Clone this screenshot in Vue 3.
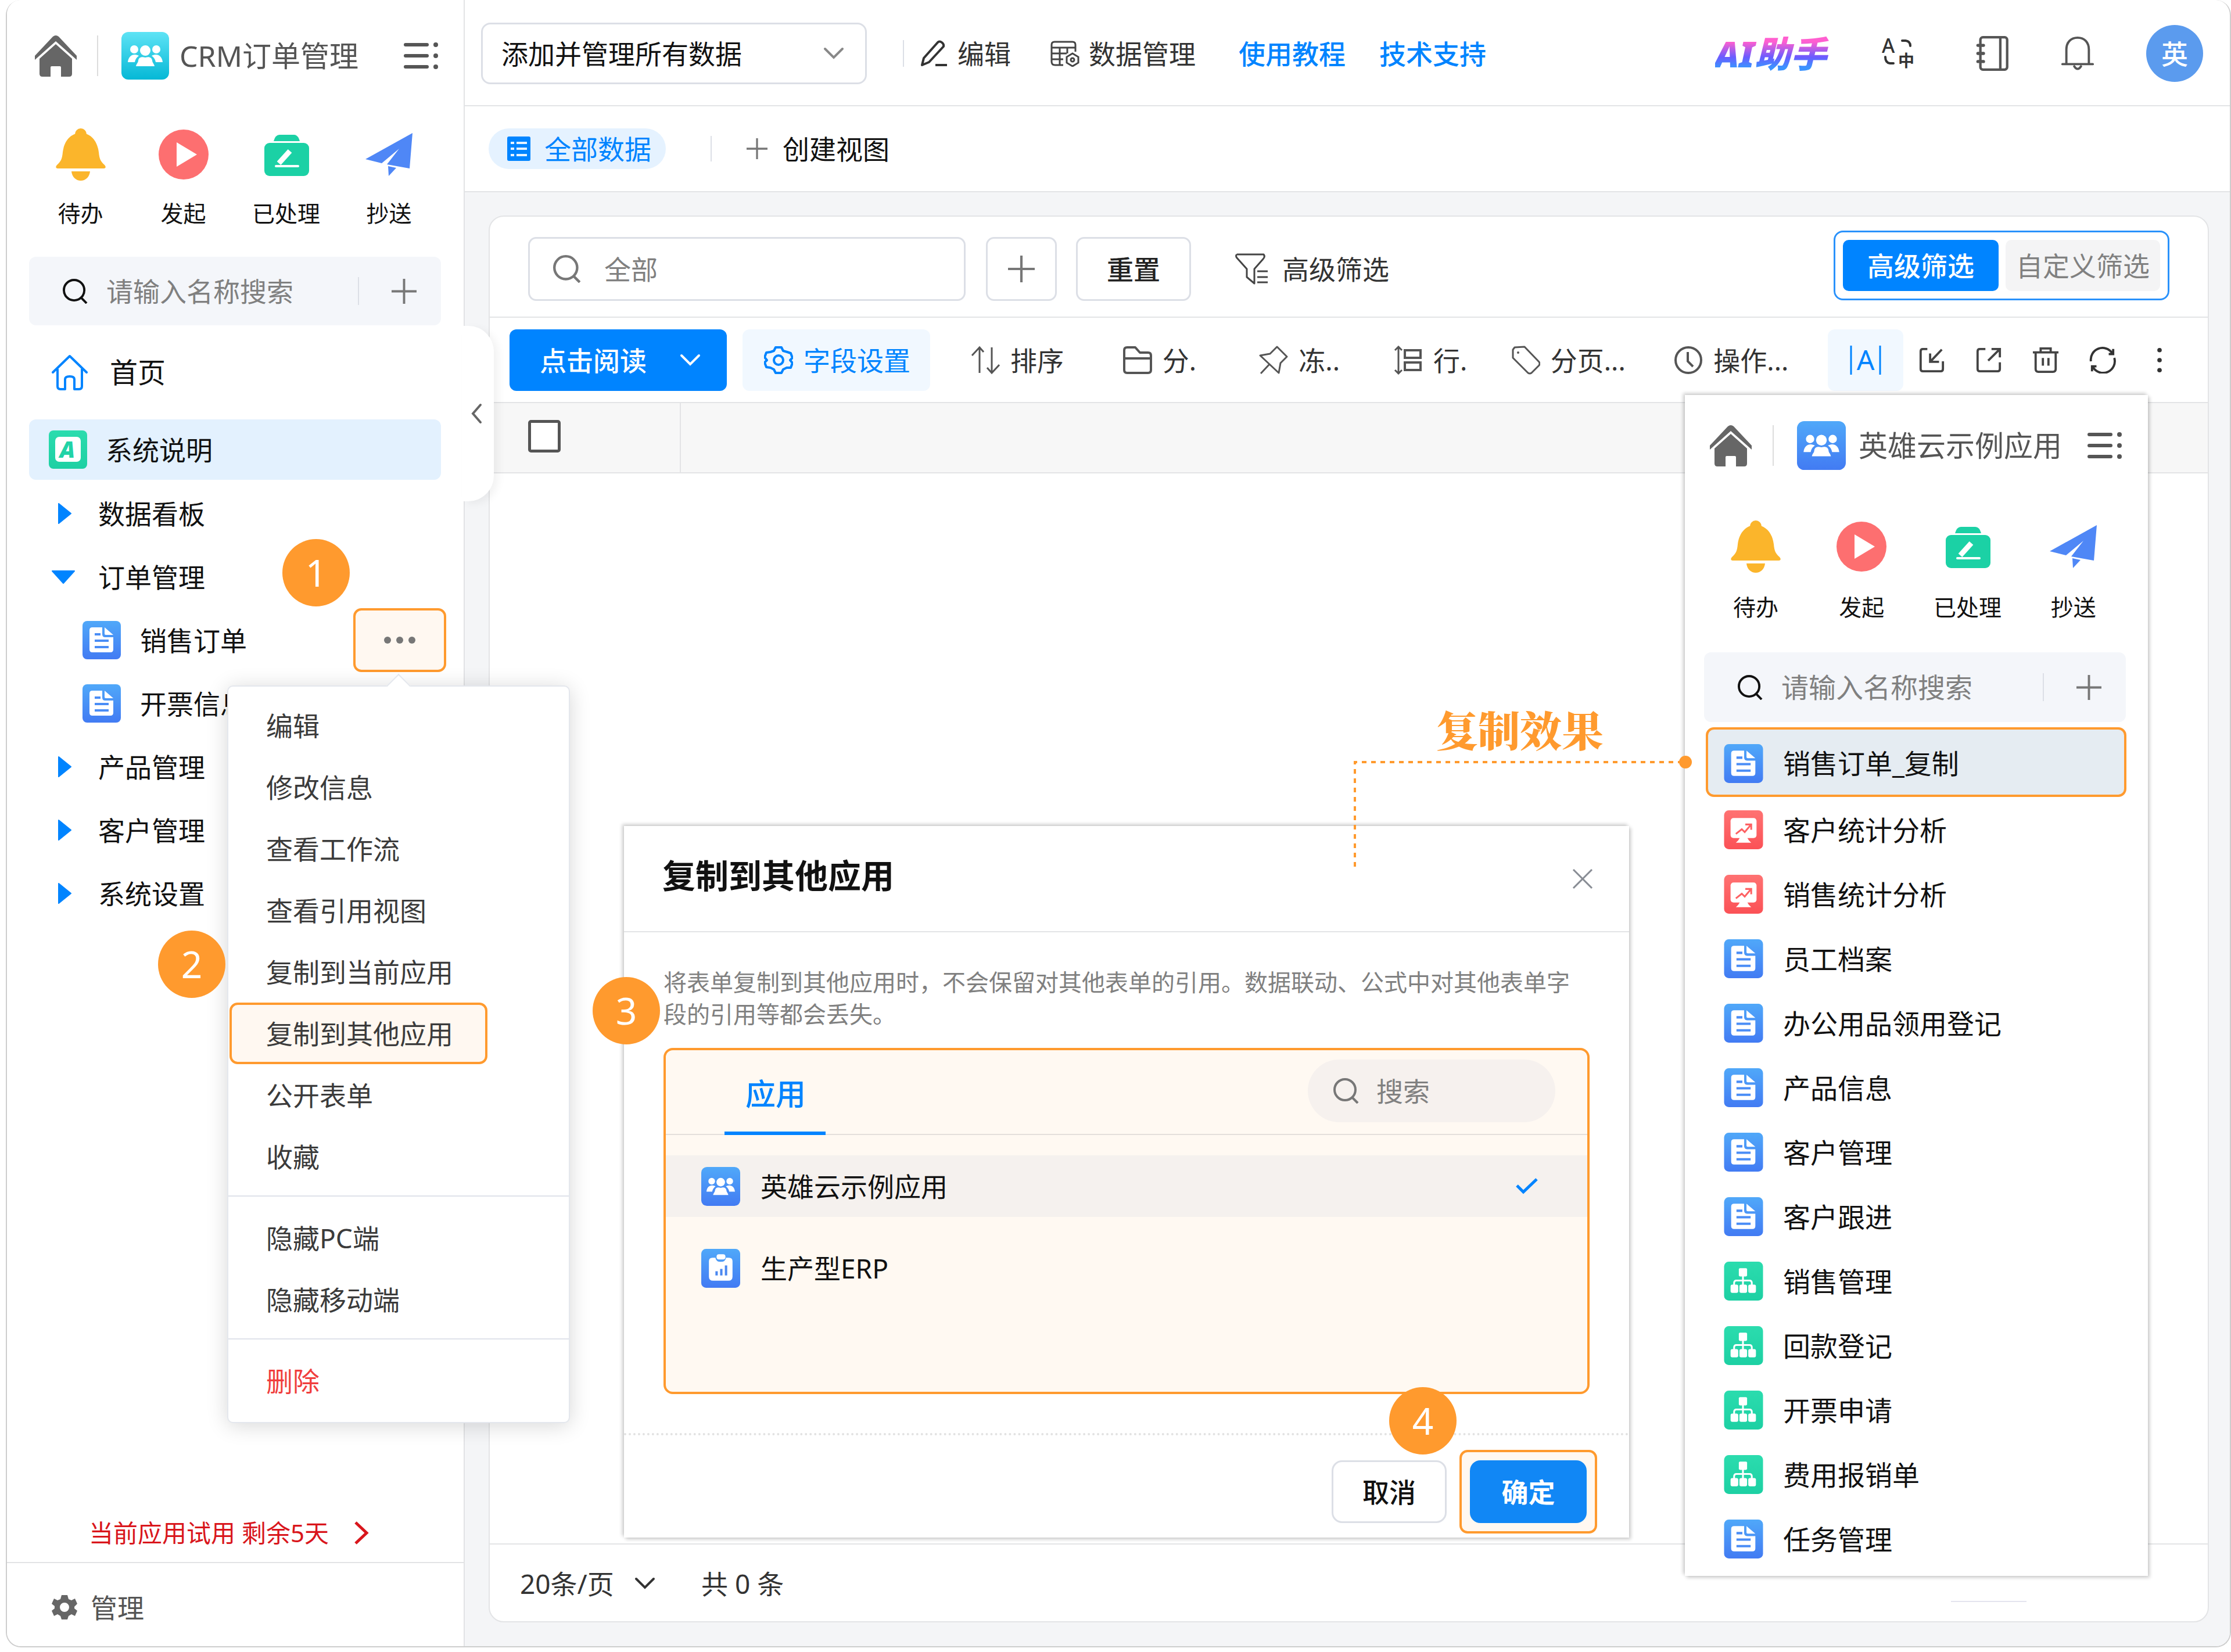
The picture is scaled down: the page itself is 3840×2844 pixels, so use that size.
<template>
  <div class="page">
    <svg class="sprite" aria-hidden="true">
      <defs>
        <linearGradient id="g-cyan" x1="0" y1="0" x2="0" y2="1"><stop offset="0" stop-color="#5ee3f5" /><stop offset="1" stop-color="#05b8d6" /></linearGradient>
        <linearGradient id="g-blue" x1="0" y1="0" x2="0" y2="1"><stop offset="0" stop-color="#50a8f9" /><stop offset="1" stop-color="#427bf3" /></linearGradient>
        <linearGradient id="g-red" x1="0" y1="0" x2="0" y2="1"><stop offset="0" stop-color="#ff7272" /><stop offset="1" stop-color="#fb5156" /></linearGradient>
        <linearGradient id="g-green" x1="0" y1="0" x2="0" y2="1"><stop offset="0" stop-color="#2bdcae" /><stop offset="1" stop-color="#1dd0a3" /></linearGradient>
        <g id="people" fill="#fff">
          <circle cx="41" cy="32" r="9" /><circle cx="22" cy="30" r="7" /><circle cx="60" cy="30" r="7" />
          <path d="M11 52C12 43 17 39 23 39c3 0 5 1 7 2c-4 3-6 6-7 11zM71 52C70 43 65 39 59 39c-3 0-5 1-7 2c4 3 6 6 7 11z" />
          <path d="M25 59C26 54 29 53 29 49C30 44 34 42 41 44C48 42 52 44 53 49C53 53 56 54 57 59z" />
        </g>
      </defs>
      <symbol id="i-home" viewBox="0 0 72 72"><path fill="#666" d="M0 36L31 3q5-4 10 0L72 36v7L36 11L0 43z" /><path fill="#666" d="M36 16L64 41V67q0 5-5 5H45V56q0-2-2-2H29q-2 0-2 2V72H13q-5 0-5-5V41z" /></symbol>
      <symbol id="i-people-cyan" viewBox="0 0 82 82"><rect width="82" height="82" rx="12" fill="url(#g-cyan)" /><use href="#people" /></symbol>
      <symbol id="i-people-blue" viewBox="0 0 82 82"><rect width="82" height="82" rx="12" fill="url(#g-blue)" /><use href="#people" /></symbol>
      <symbol id="i-menu" viewBox="0 0 60 48"><g stroke="#555" stroke-width="6" stroke-linecap="round"><path d="M4 5H41M4 24H41M4 43H41" /></g><g fill="#555"><circle cx="56" cy="5" r="4" /><circle cx="56" cy="24" r="4" /><circle cx="56" cy="43" r="4" /></g></symbol>
      <symbol id="i-todo" viewBox="0 0 92 92"><g fill="#fbb52b"><circle cx="46" cy="11" r="10" /><path d="M46 8C62 10 74 20 77 42C78 53 80 58 87 64q4 5-1 6H6q-5-1-1-6C12 58 14 53 15 42C18 20 30 10 46 8z" /><path d="M30 75H62C61 85 54 91 46 91S31 85 30 75z" /></g></symbol>
      <symbol id="i-start" viewBox="0 0 92 92"><circle cx="46" cy="46" r="43" fill="#fd6f70" /><path fill="#fff" d="M34 25L69 46L34 67z" /></symbol>
      <symbol id="i-done" viewBox="0 0 92 92"><path fill="#1bd1a5" d="M24 23q3-11 10-11H59q7 0 10 11z" /><rect x="8" y="26" width="77" height="57" rx="9" fill="#1bd1a5" /><path d="M33 61L52 40" stroke="#fff" stroke-width="9" /><path d="M28 66H66" stroke="#fff" stroke-width="4" stroke-linecap="round" /></symbol>
      <symbol id="i-copy" viewBox="0 0 92 92"><path fill="#4f87f6" d="M86 9L5 54L33 61L63 36L42 63L81 70zM44 66L58 69L45 83z" /></symbol>
      <symbol id="i-search" viewBox="0 0 44 44"><circle cx="20" cy="20" r="18" fill="none" stroke="currentColor" stroke-width="4" /><path d="M33 34L42 43" stroke="currentColor" stroke-width="4" /></symbol>
      <symbol id="i-plus" viewBox="0 0 44 44"><path d="M22 0V44M0 22H44" stroke="currentColor" stroke-width="4" /></symbol>
      <symbol id="i-house" viewBox="0 0 62 62"><path fill="none" stroke="#0084ff" stroke-width="4" stroke-linecap="round" stroke-linejoin="round" d="M2 31L31 3L60 31M10 26V55q0 5 5 5H23V43q0-5 8-5t8 5V60H47q5 0 5-5V26" /></symbol>
      <symbol id="i-doc" viewBox="0 0 66 66"><rect width="66" height="66" rx="8" fill="url(#g-blue)" /><path fill="#fff" d="M17 11H34V23q0 5 5 5H53V49q0 5-5 5H17q-5 0-5-5V16q0-5 5-5zM38 11L53 24H40q-2 0-2-2z" /><path d="M21 23H31M21 34H45M21 45H45" stroke="#4a8df6" stroke-width="4" /></symbol>
      <symbol id="i-chart" viewBox="0 0 66 66"><rect width="66" height="66" rx="8" fill="url(#g-red)" /><rect x="11" y="13" width="44" height="34" rx="5" fill="#fff" /><path fill="#fff" d="M27 46H39L42 51L46 55H20L24 51z" /><path fill="none" stroke="#fd6163" stroke-width="3" d="M20 40L30 32L35 37L45 25M36 24H46V33" /></symbol>
      <symbol id="i-org" viewBox="0 0 66 66"><rect width="66" height="66" rx="8" fill="url(#g-green)" /><g fill="#fff"><rect x="25" y="11" width="14" height="14" rx="2" /><rect x="11" y="39" width="13" height="14" rx="3" /><rect x="26" y="39" width="13" height="14" rx="3" /><rect x="41" y="39" width="13" height="14" rx="3" /></g><path fill="none" stroke="#fff" stroke-width="3" d="M32 24V40M17 40V36q0-4 4-4H43q4 0 4 4V40" /></symbol>
      <symbol id="i-report" viewBox="0 0 66 66"><rect width="66" height="66" rx="8" fill="url(#g-blue)" /><path fill="#fff" d="M19 15H24Q25 22 33 22T42 15H47q6 0 6 6V47q0 7-7 7H20q-7 0-7-7V21q0-6 6-6z" /><rect x="26" y="9" width="15" height="9" rx="4" fill="#fff" /><path d="M26 45V38M34 45V34M42 45V28" stroke="#4a87f0" stroke-width="4" /></symbol>
      <symbol id="i-right" viewBox="0 0 40 36"><path fill="#0084ff" stroke="#0084ff" stroke-width="2" stroke-linejoin="round" d="M12 1L33 18L12 35z" /></symbol>
      <symbol id="i-down" viewBox="0 0 40 36"><path fill="#0084ff" stroke="#0084ff" stroke-width="2" stroke-linejoin="round" d="M1 8H39L20 29z" /></symbol>
      <symbol id="i-chevron" viewBox="0 0 36 22"><path fill="none" stroke="currentColor" stroke-width="4" stroke-linecap="round" d="M3 3L18 18L33 3" /></symbol>
      <symbol id="i-prev" viewBox="0 0 20 36"><path fill="none" stroke="currentColor" stroke-width="4" stroke-linecap="round" d="M17 3L4 18L17 33" /></symbol>
      <symbol id="i-next" viewBox="0 0 28 42"><path fill="none" stroke="currentColor" stroke-width="5" d="M4 3L23 21L4 39" /></symbol>
      <symbol id="i-gear-solid" viewBox="0 0 44 44"><path fill="#666" fill-rule="evenodd" d="M17 1H27L29 8L34 10L40 7L44 16L39 21V24L44 28L40 37L34 34L29 37L27 43H17L15 37L10 34L4 37L0 28L5 24V20L0 16L4 7L10 10L15 8zM22 14a8 8 0 1 0 0 16a8 8 0 1 0 0-16z" /></symbol>
      <symbol id="i-edit" viewBox="0 0 46 46"><path fill="none" stroke="#333" stroke-width="4" stroke-linejoin="round" d="M3 43L6 31L30 4q3-3 7 0t3 7L15 38zM26 43H46" /></symbol>
      <symbol id="i-data" viewBox="0 0 50 46"><path fill="none" stroke="#444" stroke-width="3" d="M22 43H8q-6 0-6-6V8q0-5 5-5H38q5 0 5 5V20M2 13H43M2 23H28M2 33H22M16 13V43M29 13V23" /><path fill="none" stroke="#444" stroke-width="3" d="M38 23L48 29V39L38 45L28 39V29z" /><circle cx="38" cy="34" r="3" fill="none" stroke="#444" stroke-width="3" /></symbol>
      <symbol id="i-book" viewBox="0 0 54 56"><g fill="none" stroke="#555" stroke-width="4"><rect x="8" y="2" width="43" height="52" rx="4" /><path d="M40 2V54" /><path stroke-width="5" stroke-linecap="round" d="M4 15H13M4 28H13M4 41H13" /></g></symbol>
      <symbol id="i-bell" viewBox="0 0 58 62"><path fill="none" stroke="#555" stroke-width="4" stroke-linecap="round" stroke-linejoin="round" d="M9 49V24C9 11 17 3 29 3S49 11 49 24V49M2 50H56M23 54q6 9 12 0" /></symbol>
      <symbol id="i-list" viewBox="0 0 40 42"><rect width="40" height="42" rx="3" fill="#0084ff" /><path d="M6 11H12M16 11H34M6 21H12M16 21H34M6 32H12M16 32H34" stroke="#e5f2ff" stroke-width="4" /></symbol>
      <symbol id="i-filter" viewBox="0 0 58 56"><path fill="none" stroke="#444" stroke-width="3" stroke-linejoin="round" d="M3 3H49q3 4-1 8L33 28V53L20 42V28L3 9q-3-4 0-6M38 32H56M38 42H56M38 51H56" /></symbol>
      <symbol id="i-gear" viewBox="0 0 50 50"><path fill="none" stroke="#0084ff" stroke-width="4" stroke-linejoin="round" d="M20 3H30L33 9L40 11L46 13L49 21L45 25L49 30L46 38L39 38L33 41L30 47H20L17 41L11 38L4 37L1 29L5 25L1 20L4 12L11 11L17 9z" /><circle cx="25" cy="25" r="8" fill="none" stroke="#0084ff" stroke-width="4" /></symbol>
      <symbol id="i-sort" viewBox="0 0 50 50"><path fill="none" stroke="#555" stroke-width="3" d="M15 47V3M2 17L15 3L22 11M36 3V47M49 33L36 47L28 38" /></symbol>
      <symbol id="i-folder" viewBox="0 0 50 50"><path fill="none" stroke="#555" stroke-width="4" stroke-linejoin="round" d="M2 8q0-5 5-5H21L29 12H43q5 0 5 5V42q0 5-5 5H7q-5 0-5-5zM2 22H48" /></symbol>
      <symbol id="i-pin" viewBox="0 0 50 50"><path fill="none" stroke="#555" stroke-width="3" stroke-linejoin="round" d="M31 2L48 19L37 30L34 47L2 17L19 14zM18 32L3 48" /></symbol>
      <symbol id="i-rows" viewBox="0 0 50 50"><path fill="none" stroke="#555" stroke-width="3" d="M8 2V48M2 8L8 2L14 8M2 42L8 48L14 42" /><rect x="19" y="8" width="27" height="13" fill="none" stroke="#555" stroke-width="4" /><rect x="19" y="29" width="27" height="13" fill="none" stroke="#555" stroke-width="4" /></symbol>
      <symbol id="i-tag" viewBox="0 0 50 50"><path fill="none" stroke="#555" stroke-width="3" stroke-linejoin="round" d="M3 7L6 3L23 2L48 28q2 3 0 6L35 47q-3 2-6 0L3 21z" /><circle cx="12" cy="12" r="2" fill="#555" /></symbol>
      <symbol id="i-clock" viewBox="0 0 50 50"><circle cx="25" cy="25" r="22" fill="none" stroke="#555" stroke-width="4" /><path fill="none" stroke="#555" stroke-width="4" d="M24 11V27L33 36" /></symbol>
      <symbol id="i-import" viewBox="0 0 48 48"><path fill="none" stroke="#444" stroke-width="4" d="M16 4H8q-4 0-4 4V40q0 4 4 4H40q4 0 4-4V26M42 5L21 27M21 12V27H37" /></symbol>
      <symbol id="i-export" viewBox="0 0 48 48"><path fill="none" stroke="#444" stroke-width="4" d="M18 4H8q-4 0-4 4V40q0 4 4 4H40q4 0 4-4V28M23 25L43 5M29 4H44V19" /></symbol>
      <symbol id="i-trash" viewBox="0 0 48 48"><path fill="none" stroke="#444" stroke-width="4" d="M1 10H47M15 9V3H33V9M6 11V40q0 5 5 5H37q5 0 5-5V11M19 20V34M29 20V34" /></symbol>
      <symbol id="i-refresh" viewBox="0 0 48 48"><path fill="none" stroke="#333" stroke-width="4" d="M3 26A21 21 0 0 1 41 11M45 20A21 21 0 0 1 7 37M43 4V13H35M5 44V35H13" /></symbol>
      <symbol id="i-dots" viewBox="0 0 48 48"><circle cx="24" cy="6" r="4" fill="#333" /><circle cx="24" cy="24" r="4" fill="#333" /><circle cx="24" cy="42" r="4" fill="#333" /></symbol>
      <symbol id="i-more" viewBox="0 0 54 12"><circle cx="6" cy="6" r="6" fill="#777" /><circle cx="27" cy="6" r="6" fill="#777" /><circle cx="48" cy="6" r="6" fill="#777" /></symbol>
      <symbol id="i-close" viewBox="0 0 36 36"><path d="M2 2L34 34M34 2L2 34" stroke="#888c94" stroke-width="3" /></symbol>
      <symbol id="i-check" viewBox="0 0 40 30"><path fill="none" stroke="#0084ff" stroke-width="5" d="M3 14L14 25L37 3" /></symbol>
    </svg>

    <div class="frame">
      <aside class="sidebar">
        <div class="app-head">
          <svg class="home"><use href="#i-home" /></svg>
          <span class="head-line"></span>
          <svg class="app-icon"><use href="#i-people-cyan" /></svg>
          <span class="app-name">CRM订单管理</span>
          <svg class="menu-toggle"><use href="#i-menu" /></svg>
        </div>
        <nav class="quick">
          <a v-for="q in quick" :key="q.text" href="#"><svg><use :href="q.icon" /></svg><span>{{ q.text }}</span></a>
        </nav>
        <div class="side-search">
          <label for="side-q"><svg><use href="#i-search" /></svg></label>
          <input id="side-q" v-model="sideQuery" type="text" placeholder="请输入名称搜索" />
          <span class="search-line"></span>
          <button type="button" aria-label="添加"><svg><use href="#i-plus" /></svg></button>
        </div>
        <a class="home-link" href="#"><svg><use href="#i-house" /></svg>首页</a>
        <a class="active-link" href="#">
          <svg viewBox="0 0 66 66"><rect width="66" height="66" rx="8" fill="url(#g-green)" /><rect x="11" y="11" width="44" height="43" rx="7" fill="#fff" /><text class="note-letter" x="32" y="47" text-anchor="middle">A</text></svg>
          系统说明
        </a>
        <ul class="tree">
          <li v-for="n in tree" :key="n.text" :class="{ child: n.child }">
            <svg><use :href="n.icon" /></svg>
            <a href="#">{{ n.text }}</a>
            <span v-if="n.badge" class="badge badge-1">1</span>
            <div v-if="n.more" class="more-wrap">
              <button class="more" type="button" aria-label="更多"><svg><use href="#i-more" /></svg></button>
              <div class="menu">
                <div v-for="(group, gi) in menu" :key="gi" class="menu-group">
                  <button v-for="m in group" :key="m" type="button" :class="{ picked: m === '复制到其他应用', danger: m === '删除' }">{{ m }}</button>
                </div>
                <span class="badge badge-2">2</span>
              </div>
            </div>
          </li>
        </ul>
        <a class="trial" href="#">当前应用试用 剩余5天<svg><use href="#i-next" /></svg></a>
        <a class="manage" href="#"><svg><use href="#i-gear-solid" /></svg>管理</a>
        <button class="handle" type="button" aria-label="收起"><svg><use href="#i-prev" /></svg></button>
      </aside>

      <main class="main">
        <header class="topbar">
          <div class="select-box">
            <select v-model="scope" aria-label="数据范围"><option>添加并管理所有数据</option></select>
            <svg><use href="#i-chevron" /></svg>
          </div>
          <span class="bar-line"></span>
          <button class="top-btn" type="button"><svg class="ic-edit"><use href="#i-edit" /></svg>编辑</button>
          <button class="top-btn data" type="button"><svg class="ic-data"><use href="#i-data" /></svg>数据管理</button>
          <a class="top-link first" href="#">使用教程</a>
          <a class="top-link" href="#">技术支持</a>
          <div class="top-right">
            <a class="ai" href="#">AI助手</a>
            <svg class="ic-top ic-lang" viewBox="0 0 58 60">
              <text class="lang-a" x="0" y="29">A</text><text class="lang-zh" x="28" y="53">中</text>
              <path fill="none" stroke="#333" stroke-width="4" stroke-linecap="round" d="M35 8H41q8 1 8 9M6 36q0 10 8 11H20" />
            </svg>
            <svg class="ic-top"><use href="#i-book" /></svg>
            <svg class="ic-top"><use href="#i-bell" /></svg>
            <span class="avatar">英</span>
          </div>
        </header>
        <div class="views">
          <button class="view-pill" type="button"><svg><use href="#i-list" /></svg>全部数据</button>
          <span class="view-line"></span>
          <button class="view-add" type="button"><svg><use href="#i-plus" /></svg>创建视图</button>
        </div>
        <section class="content">
          <div class="card">
            <div class="filter-row">
              <div class="filter-input">
                <label for="all-q"><svg><use href="#i-search" /></svg></label>
                <input id="all-q" v-model="query" type="text" placeholder="全部" />
              </div>
              <button class="box-btn plus" type="button" aria-label="添加条件"><svg><use href="#i-plus" /></svg></button>
              <button class="box-btn" type="button" @click="query = ''">重置</button>
              <button class="adv" type="button"><svg><use href="#i-filter" /></svg>高级筛选</button>
              <div class="switch">
                <button v-for="s in modes" :key="s" type="button" :class="{ on: s === mode }" @click="mode = s">{{ s }}</button>
              </div>
            </div>
            <div class="tool-row">
              <button class="read" type="button">点击阅读<svg><use href="#i-chevron" /></svg></button>
              <button class="fields" type="button"><svg><use href="#i-gear" /></svg>字段设置</button>
              <div class="tools">
                <button v-for="t in tools" :key="t.icon" type="button"><svg><use :href="t.icon" /></svg>{{ t.text }}</button>
              </div>
              <button class="col-width" type="button" aria-label="列宽">
                <svg viewBox="0 0 56 50"><path d="M3 0V50M53 0V50" stroke="#0084ff" stroke-width="3" /><text class="width-letter" x="28" y="42" text-anchor="middle">A</text></svg>
              </button>
              <button v-for="t in actions" :key="t.icon" class="act" type="button" :aria-label="t.label"><svg><use :href="t.icon" /></svg></button>
            </div>
            <table class="grid">
              <thead><tr><th class="check-col"><input v-model="all" type="checkbox" aria-label="全选" /></th><th></th></tr></thead>
            </table>
            <div class="grid-body"></div>
            <footer class="pager">
              <div class="page-size">
                <select v-model="size" aria-label="每页条数"><option>20条/页</option></select>
                <svg><use href="#i-chevron" /></svg>
              </div>
              <span>共 0 条</span>
              <span class="page-line"></span>
            </footer>
          </div>
        </section>
      </main>

      <div class="dialog" role="dialog">
        <div class="dialog-head">
          <h2>复制到其他应用</h2>
          <button type="button" aria-label="关闭"><svg><use href="#i-close" /></svg></button>
        </div>
        <div class="dialog-body">
          <p>将表单复制到其他应用时，不会保留对其他表单的引用。数据联动、公式中对其他表单字段的引用等都会丢失。</p>
          <div class="picker">
            <div class="picker-head">
              <button class="picker-tab" type="button">应用</button>
              <div class="picker-search">
                <label for="app-q"><svg><use href="#i-search" /></svg></label>
                <input id="app-q" v-model="appQuery" type="text" placeholder="搜索" />
              </div>
            </div>
            <button v-for="a in apps" :key="a.text" class="picker-row" :class="{ on: a.text === picked }" type="button" @click="picked = a.text">
              <svg class="picker-icon"><use :href="a.icon" /></svg>{{ a.text }}
              <svg v-if="a.text === picked" class="tick"><use href="#i-check" /></svg>
            </button>
          </div>
        </div>
        <div class="dialog-foot">
          <button class="cancel" type="button">取消</button>
          <div class="ok-mark"><button class="ok" type="button">确定</button></div>
        </div>
        <span class="badge badge-3">3</span>
        <span class="badge badge-4">4</span>
      </div>

      <aside class="result">
        <div class="app-head">
          <svg class="home"><use href="#i-home" /></svg>
          <span class="head-line"></span>
          <svg class="app-icon"><use href="#i-people-blue" /></svg>
          <span class="app-name">英雄云示例应用</span>
          <svg class="menu-toggle"><use href="#i-menu" /></svg>
        </div>
        <nav class="quick">
          <a v-for="q in quick" :key="q.text" href="#"><svg><use :href="q.icon" /></svg><span>{{ q.text }}</span></a>
        </nav>
        <div class="side-search">
          <label for="result-q"><svg><use href="#i-search" /></svg></label>
          <input id="result-q" v-model="resultQuery" type="text" placeholder="请输入名称搜索" />
          <span class="search-line"></span>
          <button type="button" aria-label="添加"><svg><use href="#i-plus" /></svg></button>
        </div>
        <ul class="forms">
          <li v-for="(f, i) in forms" :key="f.text" :class="{ copied: i === 0 }">
            <svg><use :href="f.icon" /></svg><a href="#">{{ f.text }}</a>
          </li>
        </ul>
        <div class="callout">
          <span>复制效果</span>
          <svg viewBox="0 0 584 192">
            <path fill="none" stroke="#ff9a2e" stroke-width="4" stroke-dasharray="8 8" d="M2 191V11H570" />
            <circle cx="571" cy="11" r="11" fill="#ff9a2e" />
          </svg>
        </div>
      </aside>
    </div>
  </div>
</template>

<script setup>
import { ref } from 'vue'

const sideQuery = ref('')
const resultQuery = ref('')
const appQuery = ref('')
const query = ref('')
const scope = ref('添加并管理所有数据')
const size = ref('20条/页')
const all = ref(false)
const mode = ref('高级筛选')
const picked = ref('英雄云示例应用')

const modes = ['高级筛选', '自定义筛选']
const quick = [
  { text: '待办', icon: '#i-todo' },
  { text: '发起', icon: '#i-start' },
  { text: '已处理', icon: '#i-done' },
  { text: '抄送', icon: '#i-copy' },
]
const tree = [
  { text: '数据看板', icon: '#i-right' },
  { text: '订单管理', icon: '#i-down', badge: true },
  { text: '销售订单', icon: '#i-doc', child: true, more: true },
  { text: '开票信息', icon: '#i-doc', child: true },
  { text: '产品管理', icon: '#i-right' },
  { text: '客户管理', icon: '#i-right' },
  { text: '系统设置', icon: '#i-right' },
]
const menu = [
  ['编辑', '修改信息', '查看工作流', '查看引用视图', '复制到当前应用', '复制到其他应用', '公开表单', '收藏'],
  ['隐藏PC端', '隐藏移动端'],
  ['删除'],
]
const tools = [
  { text: '排序', icon: '#i-sort' },
  { text: '分.', icon: '#i-folder' },
  { text: '冻..', icon: '#i-pin' },
  { text: '行.', icon: '#i-rows' },
  { text: '分页...', icon: '#i-tag' },
  { text: '操作...', icon: '#i-clock' },
]
const actions = [
  { label: '导入', icon: '#i-import' },
  { label: '导出', icon: '#i-export' },
  { label: '删除', icon: '#i-trash' },
  { label: '刷新', icon: '#i-refresh' },
  { label: '更多', icon: '#i-dots' },
]
const apps = [
  { text: '英雄云示例应用', icon: '#i-people-blue' },
  { text: '生产型ERP', icon: '#i-report' },
]
const forms = [
  { text: '销售订单_复制', icon: '#i-doc' },
  { text: '客户统计分析', icon: '#i-chart' },
  { text: '销售统计分析', icon: '#i-chart' },
  { text: '员工档案', icon: '#i-doc' },
  { text: '办公用品领用登记', icon: '#i-doc' },
  { text: '产品信息', icon: '#i-doc' },
  { text: '客户管理', icon: '#i-doc' },
  { text: '客户跟进', icon: '#i-doc' },
  { text: '销售管理', icon: '#i-org' },
  { text: '回款登记', icon: '#i-org' },
  { text: '开票申请', icon: '#i-org' },
  { text: '费用报销单', icon: '#i-org' },
  { text: '任务管理', icon: '#i-doc' },
]
</script>

<style>
body{background:#fff}
</style>

<style scoped>
*{box-sizing:border-box}
.page{min-height:100vh;display:flex;padding:0 0 8px 10px;font-family:'Noto Sans','Noto Sans CJK SC',sans-serif;font-size:46px;line-height:60px;color:#111;white-space:nowrap}
.sprite{position:absolute;width:0;height:0}
svg{display:block;flex:none}
a{color:inherit;text-decoration:none}
button,input,select{font:inherit;color:inherit;background:none;border:0;padding:0;margin:0;outline:none}
button{cursor:pointer}
input::placeholder{color:#808080;opacity:1}
select{appearance:none}
ul{list-style:none;margin:0;padding:0}
.frame{position:relative;flex:1;display:flex;min-width:0;border:2px solid #cdcdcd;border-top:0;border-radius:26px}

/* sidebar */
.sidebar{position:relative;z-index:2;width:788px;flex:none;display:flex;flex-direction:column;border-right:2px solid #e2e3e5;border-radius:24px 0 0 24px;background:#fff}
.app-head{display:flex;align-items:center;height:192px;padding:0 44px 0 48px}
.home{width:72px;height:72px}
.head-line{width:2px;height:70px;margin:0 40px 0 35px;background:#dcdcdc}
.app-icon{width:82px;height:82px}
.app-name{margin-left:18px;font-size:50px;color:#555}
.menu-toggle{width:60px;height:48px;margin-left:auto}
.quick{display:grid;grid-template-columns:repeat(4,1fr);padding:28px 40px 50px 38px;font-size:39px;line-height:50px}
.quick a{display:flex;flex-direction:column;align-items:center;gap:30px}
.quick svg{width:92px;height:92px}
.side-search{display:flex;align-items:center;height:118px;margin:0 39px 0 38px;padding:0 42px 0 58px;border-radius:12px;background:#f4f6fa}
.side-search svg{width:43px;height:43px}
.side-search label{color:#111}
.side-search input{flex:1;min-width:0;margin-left:32px}
.search-line{width:2px;height:48px;margin-right:56px;background:#dcdfe6}
.side-search button{color:#777}
.home-link{display:flex;align-items:center;gap:38px;height:162px;padding-left:77px;font-size:48px}
.home-link svg{width:62px;height:62px}
.active-link{display:flex;align-items:center;gap:32px;height:104px;margin:0 39px 3px 38px;padding-left:34px;border-radius:12px;background:#e3f1fe}
.active-link svg{width:66px;height:66px}
.note-letter{font-family:'Noto Sans',sans-serif;font-size:39px;font-weight:900;font-style:italic;fill:#22d3a7}
.tree{padding:0 30px 0 38px}
.tree li{position:relative;display:flex;align-items:center;gap:40px;height:109px;padding-left:39px}
.tree svg{width:40px;height:36px}
.tree li.child{gap:33px;padding-left:92px}
.tree li.child > svg{width:66px;height:66px}
.more-wrap{position:relative;margin-left:auto}
.more{display:flex;align-items:center;justify-content:center;width:160px;height:110px;border:4px solid #ff9a2e;border-radius:14px;background:#fff8f1}
.more svg{width:54px;height:12px}
.menu{position:absolute;top:133px;left:-217px;z-index:3;width:590px;border:2px solid #e4e7ed;border-radius:10px;background:#fff;box-shadow:0 4px 36px rgba(0,0,0,.16);color:#3b3b3b}
.menu::before{content:'';position:absolute;top:-16px;left:278px;width:28px;height:28px;border:2px solid #e4e7ed;border-right:0;border-bottom:0;background:#fff;transform:rotate(45deg)}
.menu-group{display:flex;flex-direction:column;padding:14px 0}
.menu-group + .menu-group{padding-top:18px;border-top:2px solid #dfe2ea}
.menu-group:nth-child(3){padding-bottom:18px}
.menu-group button{height:106px;padding-left:65px;text-align:left}
.menu-group button.picked{width:444px;margin-left:2px;padding-left:59px;border:4px solid #ff9a2e;border-radius:14px;background:#fff8f1}
.menu-group button.danger{color:#f03e3e}
.badge{position:absolute;z-index:4;width:116px;height:116px;border-radius:50%;background:#ff9a2e;color:#fff;font-size:64px;line-height:116px;text-align:center}
.badge-1{top:-10px;left:436px}
.badge-2{top:420px;left:-121px}
.badge-3{top:260px;left:-54px}
.badge-4{top:966px;left:1317px}
.trial{display:flex;align-items:center;gap:42px;margin-top:auto;padding:0 0 20px 141px;font-size:42px;color:#d9161c}
.trial svg{width:28px;height:42px}
.manage{display:flex;align-items:center;gap:23px;height:145px;padding:8px 0 0 77px;border-top:2px solid #e2e3e5;color:#555}
.manage svg{width:44px;height:44px}
.handle{position:absolute;top:561px;left:784px;display:flex;align-items:center;width:54px;height:302px;padding-left:14px;border-radius:0 44px 44px 0;background:#fff;box-shadow:8px 4px 14px rgba(0,0,0,.05);color:#666}
.handle svg{width:20px;height:36px}

/* main area */
.main{flex:1;min-width:0;display:flex;flex-direction:column}
.topbar{display:flex;align-items:center;height:183px;padding:2px 46px 0 28px;border-bottom:2px solid #e3e4e6}
.select-box{display:flex;align-items:center;width:664px;height:106px;border:3px solid #dcdfe6;border-radius:16px}
.select-box select{flex:1;height:100%;padding-left:32px;color:#111}
.select-box svg{width:36px;height:22px;margin-left:-74px;margin-right:36px;color:#888;pointer-events:none}
.bar-line{width:2px;height:46px;margin:0 28px 0 62px;background:#dcdfe6}
.top-btn{display:flex;align-items:center;gap:18px;color:#333}
.top-btn.data{margin-left:68px}
.top-btn.data{gap:16px}
.ic-edit{width:46px;height:46px}
.ic-data{width:50px;height:46px}
.top-link{margin-left:58px;font-weight:500;color:#0084ff}
.top-link.first{margin-left:74px}
.top-right{display:flex;align-items:center;gap:89px;margin-left:auto}
.ai{padding-right:6px;font-size:62px;line-height:80px;font-weight:900;font-style:italic;background:linear-gradient(180deg,#ff5fd0 25%,#6a5cff 58%,#3b93ff 80%);-webkit-background-clip:text;background-clip:text;color:transparent}
.ic-top{width:58px;height:60px}
.ic-lang{margin-right:14px}
.lang-a{font-family:'Noto Sans',sans-serif;font-size:34px;font-weight:500;fill:#333}
.lang-zh{font-family:'Noto Sans CJK SC',sans-serif;font-size:28px;font-weight:700;fill:#333}
.avatar{width:98px;height:98px;border-radius:50%;background:#5b9bee;color:#fff;font-weight:500;line-height:98px;text-align:center}
.views{display:flex;align-items:center;height:148px;padding:0 41px;border-bottom:2px solid #e3e4e6}
.view-pill{display:flex;align-items:center;gap:24px;height:70px;padding:0 25px 0 32px;border-radius:35px;background:#e5f2ff;color:#0084ff}
.view-pill svg{width:40px;height:42px}
.view-line{width:2px;height:44px;margin:0 60px 0 77px;background:#dcdfe6}
.view-add{display:flex;align-items:center;gap:26px}
.view-add svg{width:36px;height:36px;color:#777}
.content{flex:1;display:flex;padding:40px 36px 41px 41px;border-radius:0 0 24px 0;background:#f4f5f7}
.card{flex:1;min-width:0;display:flex;flex-direction:column;border:2px solid #e3e4e6;border-radius:26px;background:#fff}
.filter-row{display:flex;align-items:center;height:174px;padding:24px 66px 16px 66px;border-bottom:2px solid #e3e4e6}
.filter-input{display:flex;align-items:center;width:753px;height:110px;margin-right:35px;padding-left:40px;border:3px solid #dcdfe6;border-radius:14px}
.filter-input svg{width:48px;height:48px;color:#777}
.filter-input input{flex:1;min-width:0;margin-left:40px}
.box-btn{height:110px;margin-right:76px;padding:0 50px;border:3px solid #dcdfe6;border-radius:14px;color:#222;font-weight:500}
.box-btn.plus{margin-right:33px;padding:0 35px;color:#777}
.box-btn svg{width:46px;height:46px}
.adv{display:flex;align-items:center;gap:23px;color:#333}
.adv svg{width:58px;height:56px}
.switch{display:flex;align-self:flex-start;gap:12px;height:120px;margin-left:auto;padding:13px;border:3px solid #2a92fb;border-radius:16px}
.switch button{height:88px;padding:0 18px;border-radius:10px;background:#f4f4f5;color:#808080}
.switch button.on{padding:0 42px;background:#0084ff;color:#fff;font-weight:500}
.tool-row{display:flex;align-items:center;height:147px;padding:0 34px;border-bottom:2px solid #e3e4e6;color:#333}
.read{display:flex;align-items:center;gap:56px;height:106px;padding:0 44px 0 52px;border-radius:12px;background:#0084ff;color:#fff;font-weight:500}
.read svg{width:38px;height:22px}
.fields{display:flex;align-items:center;gap:18px;height:106px;margin:0 70px 0 27px;padding:0 34px 0 37px;border-radius:12px;background:#f1f8ff;color:#0084ff}
.fields svg{width:50px;height:50px}
.tools{flex:1;display:grid;grid-template-columns:262fr 235fr 232fr 202fr 281fr 265fr}
.tools button{display:flex;align-items:center;gap:18px}
.tools svg{width:50px;height:50px}
.col-width{display:flex;align-items:center;justify-content:center;width:130px;height:106px;border-radius:12px;background:#f1f8ff}
.col-width svg{width:56px;height:50px}
.width-letter{font-family:'Noto Sans',sans-serif;font-size:48px;fill:#0084ff}
.act{display:flex;justify-content:center;width:98px}
.act svg{width:46px;height:46px}
.grid{width:100%;border-collapse:collapse;background:#f7f7f7}
.grid th{height:120px;padding:0;border-bottom:2px solid #e3e4e6;text-align:left}
.check-col{width:328px;border-right:2px solid #e3e4e6}
.grid th input{display:block;appearance:none;width:56px;height:56px;margin:0 0 5px 66px;border:5px solid #555;border-radius:5px;background:#fff}
.grid-body{flex:1}
.pager{display:flex;align-items:center;gap:78px;height:134px;padding:2px 52px 0;border-top:2px solid #e3e4e6;color:#333}
.page-size{display:flex;align-items:center}
.page-size select{padding-right:72px}
.page-size svg{width:38px;height:22px;margin-left:-38px;pointer-events:none}
.page-line{align-self:flex-end;width:130px;height:2px;margin:0 260px 33px auto;background:#e4e4ee}

/* copy dialog */
.dialog{position:absolute;top:1422px;left:1062px;z-index:1;width:1730px;background:#fff;box-shadow:-3px -3px 6px rgba(0,0,0,.2),3px 3px 6px rgba(0,0,0,.2)}
.dialog-head{display:flex;align-items:center;justify-content:space-between;height:183px;padding:0 62px 0 66px;border-bottom:2px solid #e3e4e6}
.dialog-head h2{margin:0 0 12px;font-size:57px;line-height:72px;font-weight:700}
.dialog-head svg{width:36px;height:36px}
.dialog-body{padding:58px 68px 67px}
.dialog-body p{margin:0 0 31px;font-size:40px;line-height:55px;color:#808080;white-space:normal}
.picker{min-height:596px;border:4px solid #ff9a2e;border-radius:16px;background:#fff9f2}
.picker-head{display:flex;align-items:flex-end;justify-content:space-between;height:146px;margin-bottom:35px;padding:0 55px 0 101px;border-bottom:2px solid #e4dfdb}
.picker-tab{height:128px;margin-bottom:-2px;padding:0 34px 8px 36px;border-bottom:6px solid #0084ff;font-size:52px;font-weight:500;color:#0084ff}
.picker-search{display:flex;align-items:center;gap:30px;width:426px;height:108px;margin-bottom:20px;padding-left:44px;border-radius:54px;background:#f6f1ee}
.picker-search svg{width:44px;height:44px;color:#777}
.picker-search input{width:250px}
.picker-row{display:flex;align-items:center;gap:35px;width:100%;height:106px;margin-bottom:35px;padding:0 84px 0 61px}
.picker-row.on{background:#f5f1ee}
.picker-icon{width:67px;height:67px}
.tick{width:40px;height:30px;margin-left:auto}
.dialog-foot{display:flex;align-items:center;justify-content:flex-end;gap:22px;padding:25px 55px 7px;border-top:4px dotted #e2e2e2}
.cancel{width:198px;height:108px;border:3px solid #dcdfe6;border-radius:18px;font-weight:500}
.ok-mark{padding:14px;border:4px solid #ff9a2e;border-radius:14px;background:#fff8f1}
.ok{display:block;width:201px;height:108px;border-radius:18px;background:#1187f5;color:#fff;font-weight:700}

/* copied-to app panel */
.result{position:absolute;top:680px;right:141px;z-index:2;width:797px;padding-bottom:8px;background:#fff;box-shadow:-3px -3px 6px rgba(0,0,0,.2),3px 3px 6px rgba(0,0,0,.2);font-size:47px}
.result .app-head{height:174px;padding:0 45px 0 43px}
.result .head-line{margin:0 40px 0 36px}
.result .app-icon{width:84px;height:84px}
.result .app-name{margin-left:22px}
.result .quick{padding:41px 37px 53px 31px}
.result .quick a{gap:33px}
.result .side-search{height:120px;margin:0 38px 9px 33px}
.forms li{display:flex;align-items:center;gap:34px;height:111px;padding-left:67px}
.forms svg{width:68px;height:67px}
.forms li.copied{width:724px;height:120px;margin:0 0 1px 36px;padding:4px 0 0 27px;border:4px solid #ff9a2e;border-radius:14px;background:#e5ecf2}
.callout{position:absolute;top:532px;left:-570px;width:584px;color:#ff9a2e}
.callout span{display:block;padding:0 0 4px 142px;font-family:'Noto Serif CJK SC','Noto Sans CJK SC',serif;font-size:72px;line-height:85px;font-weight:900}
.callout svg{width:584px;height:192px}
</style>
